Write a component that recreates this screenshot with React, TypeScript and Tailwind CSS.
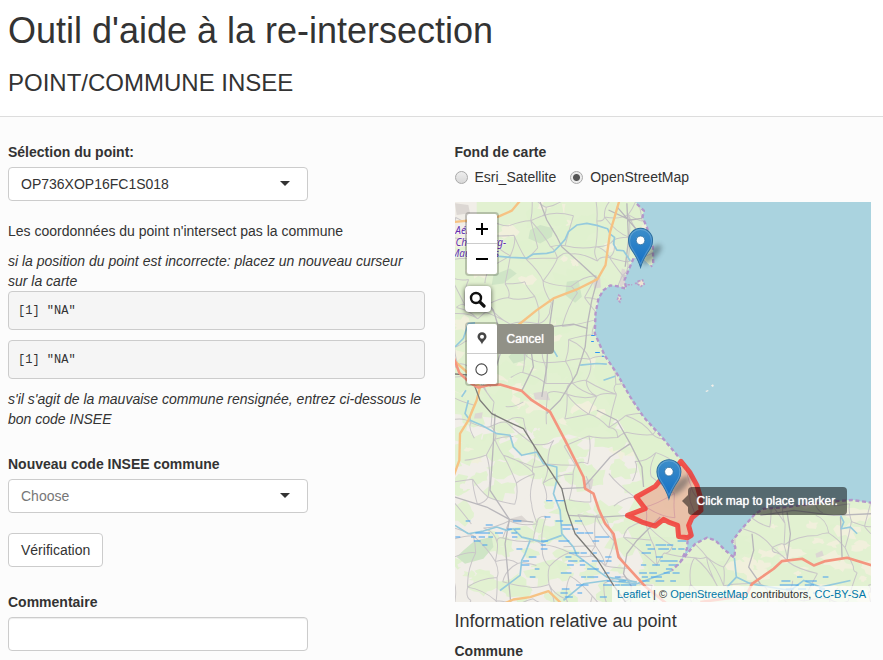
import React from "react";

function seeded(seed: number) {
  let s = seed;
  return () => {
    s = (s * 1664525 + 1013904223) % 4294967296;
    return s / 4294967296;
  };
}

/* Map drawing units: three per screen pixel. */
const LAND =
  "M0 0 L555 0 L560 12 L581 32 L577 52 L590 82 L599 112 L608 140 L609 190 L602 200 L590 188 L575 172 L550 175 L535 210 L523 240 L528 266 L500 258 L480 256 L460 270 L445 295 L436 340 L434 400 L445 425 L463 465 L500 520 L540 590 L580 650 L630 705 L685 770 L700 785 L740 855 L752 925 L725 952 L712 1020 L710 1045 L690 1085 L665 1110 L735 1030 L770 1012 L795 1020 L825 1050 L852 1072 L855 1040 L845 1023 L870 990 L915 940 L940 925 L1010 920 L1120 905 L1205 899 L1270 908 L1270 1210 L0 1210 Z";

const COAST =
  "M560 12 L581 32 L577 52 L590 82 L599 112 L608 140 L609 190 L602 200 M550 175 L535 210 L523 240 L528 266 L500 258 L480 256 L460 270 L445 295 L436 340 L434 400 L445 425 L463 465 L500 520 L540 590 L580 650 L630 705 L685 770 M712 1020 L710 1045 L690 1085 L665 1110 M690 1085 L735 1030 L770 1012 L795 1020 L825 1050 L852 1072 L855 1040 L845 1023 L870 990 L915 940 L940 925 L1010 920 L1120 905 L1205 899 L1270 908";

function blobs(seed: number, count: number, x0: number, y0: number, w: number, h: number, size: number) {
  const r = seeded(seed);
  const out: string[] = [];
  for (let i = 0; i < count; i++) {
    const cx = x0 + r() * w;
    const cy = y0 + r() * h;
    const rad = size * (0.4 + r());
    const pts: string[] = [];
    for (let k = 0; k < 13; k++) {
      const a = (k / 13) * Math.PI * 2;
      const q = rad * (0.45 + r() * 0.8);
      pts.push(`${(cx + Math.cos(a) * q * 1.25).toFixed(0)} ${(cy + Math.sin(a) * q * 0.8).toFixed(0)}`);
    }
    out.push(`M${pts.join(" L")} Z`);
  }
  return out.join(" ");
}

function lanes(seed: number, step: number, keep: number) {
  const r = seeded(seed);
  const cols = Math.ceil(1280 / step) + 1;
  const rows = Math.ceil(1220 / step) + 1;
  const nodes: number[][][] = [];
  for (let j = 0; j < rows; j++) {
    nodes.push([]);
    for (let i = 0; i < cols; i++) {
      nodes[j].push([(i + (r() - 0.5) * 0.8) * step, (j + (r() - 0.5) * 0.8) * step]);
    }
  }
  const out: string[] = [];
  const link = (a: number[], b: number[]) => {
    const mx = (a[0] + b[0]) / 2 + (r() - 0.5) * step * 0.55;
    const my = (a[1] + b[1]) / 2 + (r() - 0.5) * step * 0.55;
    out.push(`M${a[0].toFixed(0)} ${a[1].toFixed(0)} Q${mx.toFixed(0)} ${my.toFixed(0)} ${b[0].toFixed(0)} ${b[1].toFixed(0)}`);
  };
  for (let j = 0; j < rows - 1; j++) {
    for (let i = 0; i < cols - 1; i++) {
      if (r() < keep) link(nodes[j][i], nodes[j][i + 1]);
      if (r() < keep) link(nodes[j][i], nodes[j + 1][i]);
      if (r() < keep * 0.35) link(nodes[j][i], nodes[j + 1][i + 1]);
    }
  }
  return out.join(" ");
}

function marsh(seed: number, areas: number[][]) {
  const r = seeded(seed);
  const out: string[] = [];
  for (const [x, y, w, h, n] of areas) {
    for (let i = 0; i < n; i++) {
      const px = x + r() * w;
      const py = Math.round((y + r() * h) / 12) * 12 + 1;
      out.push(`M${px.toFixed(0)} ${py + 0.5} h${(12 + r() * 12).toFixed(0)}`);
    }
  }
  return out.join(" ");
}

const GREEN = blobs(7, 150, 0, 0, 1270, 1210, 40);
const CREAM = blobs(21, 110, 0, 0, 1270, 780, 25);
const PALE = blobs(43, 28, 0, 760, 500, 440, 28);
const MEADOW = blobs(64, 60, 0, 640, 620, 560, 32);
const CREAM_EAST = blobs(88, 40, 860, 900, 400, 300, 22);
const WOODS =
  "M240 90 L270 75 L310 85 L305 110 L270 130 L235 115 Z M350 245 L385 240 L395 290 L375 308 L345 285 Z M130 225 L180 205 L200 220 L160 250 L125 255 Z M175 470 L205 440 L240 450 L225 480 L190 490 Z M40 1050 L75 1020 L125 1010 L130 1040 L100 1075 L45 1090 L20 1070 Z";
const LANES = lanes(12, 60, 0.58);
const MARSH = marsh(5, [
  [15, 960, 200, 70, 20],
  [320, 960, 60, 100, 10],
  [330, 1040, 150, 150, 38],
  [180, 1010, 110, 130, 10],
  [565, 1030, 105, 110, 40],
  [450, 1120, 130, 60, 9],
  [975, 1130, 150, 50, 20],
  [640, 1010, 90, 40, 6],
  [280, 880, 50, 80, 5],
  [395, 980, 70, 40, 5],
]);

function Pin({ x, y }: { x: number; y: number }) {
  return (
    <g transform={`translate(${x} ${y}) scale(3)`}>
      <ellipse cx="11" cy="-13" rx="13" ry="5" transform="rotate(-44 11 -13)" fill="#25333a" opacity="0.42" filter="url(#soft)" />
      <path
        d="M0 0 C-1.6 -6 -5 -12 -9.5 -18.5 C-11.3 -21.2 -12 -23.4 -12 -27 A12 12 0 0 1 12 -27 C12 -23.4 11.3 -21.2 9.5 -18.5 C5 -12 1.6 -6 0 0 Z"
        fill="url(#pin)"
        stroke="#2d6f9f"
        strokeWidth="1"
      />
      <path
        d="M0 -3.4 C-2 -8.4 -5 -13.6 -8.6 -19 C-10.2 -21.4 -10.9 -23.4 -10.9 -27 A10.9 10.9 0 0 1 10.9 -27 C10.9 -23.4 10.2 -21.4 8.6 -19 C5 -13.6 2 -8.4 0 -3.4 Z"
        fill="none"
        stroke="#ffffff"
        strokeOpacity="0.2"
        strokeWidth="1"
      />
      <circle cx="0" cy="-27" r="4.3" fill="#ffffff" stroke="#2f6f9f" strokeWidth="0.8" />
    </g>
  );
}

function MapDrawing() {
  return (
    <svg viewBox="15 6 1248 1200" preserveAspectRatio="xMinYMin slice" className="block h-full w-full" aria-hidden="true">
      <defs>
        <clipPath id="land">
          <path d={LAND} />
        </clipPath>
        <linearGradient id="pin" x1="0" y1="0" x2="0" y2="1">
          <stop offset="0" stopColor="#3d8ec9" />
          <stop offset="1" stopColor="#126fc6" />
        </linearGradient>
        <filter id="soft" x="-50%" y="-100%" width="200%" height="300%">
          <feGaussianBlur stdDeviation="2.4" />
        </filter>
      </defs>
      <rect x="0" y="0" width="1300" height="1250" fill="#aad3df" />
      <g clipPath="url(#land)">
        <path d={LAND} fill="#e2f1d1" />
        <path d="M0 0 H80 V120 H0 Z M0 640 L200 660 L420 720 L520 640 L590 830 L520 960 L640 1210 L0 1210 Z" fill="#f1eee8" />
        <path d={CREAM} fill="#f1f0dc" />
        <path d={GREEN} fill="#e0f1cf" />
        <path d={PALE} fill="#f1eee8" />
        <path d={MEADOW} fill="#e2f1d1" />
        <path d="M445 425 L500 520 L640 715 L720 800 L640 870 L580 860 L540 720 L470 600 L430 520 Z" fill="#e0f1cf" />
        <path d="M560 1010 L700 1010 L690 1090 L850 1080 L870 1180 L620 1180 Z" fill="#dff0ce" />
        <path d={CREAM_EAST} fill="#f1f0dc" />
        <path d={WOODS} fill="#cfe5c6" />
        <path
          d="M515 205 L525 208 L526 250 L508 262 L510 235 Z M428 240 L450 232 L452 262 L432 266 Z M15 10 L55 15 L60 40 L20 45 Z M250 578 L290 572 L300 600 L255 598 Z M180 955 L215 945 L235 965 L190 968 Z M400 840 L430 835 L425 865 L405 870 Z M75 640 L98 636 L95 655 L72 655 Z M1095 1060 L1115 1050 L1120 1066 L1098 1072 Z"
          fill="#dcd7d3"
        />
        <path d={LANES} fill="none" stroke="#c9c6c8" strokeWidth="3" />
        <g fill="none" stroke="#b9b7bb" strokeWidth="4" strokeLinejoin="round">
          <path d="M442 237 L425 300 L412 370 L405 440 L380 520 L330 600 L290 640" />
          <path d="M310 295 L295 400 L290 500 L275 590" />
          <path d="M270 6 L290 60 L320 110 L335 140 L380 180 L442 237" />
          <path d="M145 430 L230 395 L300 380 L370 372 L412 385" />
          <path d="M135 640 L128 760 L120 870 L178 957 L165 1030 L182 1206" />
          <path d="M15 890 L110 920 L178 957 L250 965" />
          <path d="M335 865 L400 862 L480 770 L540 730 L500 660 L440 630" />
          <path d="M540 730 L575 800 L580 860" />
          <path d="M355 945 L450 950 L535 945" />
          <path d="M630 950 L560 1020 L530 1060 L520 1120 L545 1160" />
          <path d="M905 1000 L910 1050 L895 1100 L930 1150" />
          <path d="M930 945 L1030 930 L1150 945 L1265 940" />
          <path d="M1010 935 L1020 1000 L1010 1080 M1170 950 L1175 1075" />
          <path d="M475 30 L540 60 L575 55 M500 20 L560 90 L590 110 M530 10 L535 120 L525 200" />
          <path d="M120 560 L160 430 L130 330 L80 270 M215 572 L250 500 L240 430" />
        </g>
        <g fill="none" stroke="#95cadd" strokeWidth="5" strokeLinejoin="round">
          <path d="M140 168 L180 172 L230 174 L250 162 L290 160 L310 155 L330 135 L345 118 L355 95 L380 75 L410 70 L440 76 L472 86 L480 102 L493 112 L490 132 L500 150 L520 152 L540 182" />
          <path d="M55 600 L45 640 L60 660 L95 675 L140 700 L180 705 L190 740 L215 765 L260 755 L280 790 L320 800 L320 840 L310 880 L330 930 L335 1000 L370 1040 L380 1065 L420 1095 L470 1130 L560 1145" />
          <path d="M15 975 L55 1000 L100 992 L140 980 L170 990 L190 985 L215 1010 L280 1025 L335 1005" />
          <path d="M240 1020 L225 1060 L215 1080 L210 1125 L150 1170 M340 1200 L400 1150 L470 1140 L560 1150 L665 1110" />
          <path d="M15 440 L40 415 L55 370 L75 368 M390 495 L440 490 L470 492 M460 540 L495 528 M35 590 L48 570 M310 450 L322 470" />
          <path d="M852 1072 L858 1130 L830 1160 M858 1130 L900 1150 L960 1160 L1020 1170 L1060 1140 L1110 1160 L1200 1140" />
          <path d="M1170 945 L1180 965 L1172 985 L1200 980 L1220 1000" />
        </g>
        <path d={MARSH} fill="none" stroke="#429ff0" strokeWidth="3" />
        <path d="M423 406 h12 M423 424 h8 M435 457 h14 M455 468 h6" fill="none" stroke="#2b93f5" strokeWidth="3" />
        <g fill="none" stroke="#f6c283" strokeWidth="7" strokeLinejoin="round">
          <path d="M508 0 L492 55 L480 95 L466 195 L442 237 L380 268 L310 295 L260 330 L210 370 L140 430" />
          <path d="M0 67 L75 60 L145 50 L185 32 L212 0" />
          <path d="M0 470 L50 515 L90 560 L80 600 L55 660 L30 700 L28 780 L8 835" />
          <path d="M160 1210 L190 1197 L240 1190 L295 1172 L335 1210" />
        </g>
        <path d="M0 520 L60 525 L75 560 L90 600 L125 640 L175 665 L220 685 L270 765 L335 865 L350 930 L375 1000 L440 1075 L490 1155 L530 1210" fill="none" stroke="#7d7d7a" strokeWidth="4" strokeLinejoin="round" />
        <g fill="none" stroke="#f4957f" strokeWidth="8" strokeLinejoin="round">
          <path d="M10 470 L28 518 L60 548 L85 562 L115 555 L150 553 L215 572 L245 600 L300 635 L345 720 L400 830 L405 865 L430 880 L445 925 L465 970 L490 1000 L505 1070 L585 1158 L650 1210" />
          <path d="M750 1205 L840 1192 L890 1180 L905 1150 L970 1105 L995 1082 L1055 1075 L1090 1095 L1125 1082 L1190 1072 L1265 1095" />
        </g>
      </g>
      <g fill="#eee4d2" stroke="#b99cc9" strokeWidth="5" strokeDasharray="7 4">
        <path d="M564 243 L577 240 L582 252 L572 259 L563 252 Z M506 285 L513 291 L509 305 L502 298 Z" />
        <path d="M532 254 h14 M554 250 h8" />
      </g>
      <path d={COAST} fill="none" stroke="#b497cb" strokeWidth="7" strokeDasharray="12 8" strokeLinejoin="round" />
      <path d="M765 572 l8 -3 l2 3 l-7 3 Z M782 556 l6 -4 l3 5 l-5 3 Z" fill="#f2efe9" />
      <g className="text-[30px] italic" fill="#6430ae" stroke="#ffffff" strokeOpacity="0.6" strokeWidth="3" paintOrder="stroke" fontFamily="'Noto Sans', sans-serif">
        <text x="16" y="102">Aéroport</text>
        <text x="168" y="138" textAnchor="end">Cherbourg-</text>
        <text x="147" y="172" textAnchor="end">Maupertus</text>
      </g>
      <path
        d="M692 783 L718 815 L740 855 L750 890 L752 930 L725 952 L715 975 L723 1005 L712 1012 L685 1008 L682 975 L655 965 L640 957 L615 977 L575 965 L532 945 L585 925 L558 890 L615 858 L630 840 L665 820 Z"
        fill="#ff3333"
        fillOpacity="0.25"
        stroke="#f23a36"
        strokeOpacity="0.85"
        strokeWidth="15"
        strokeLinejoin="round"
      />
      <Pin x={571} y={202} />
      <Pin x={656} y={895} />
    </svg>
  );
}

function Caret() {
  return (
    <svg viewBox="0 0 10 5" className="pointer-events-none absolute top-[14px] right-[18px] h-[5px] w-[10px]" aria-hidden="true">
      <path d="M0 0 H10 L5 5 Z" fill="#333333" />
    </svg>
  );
}

function Select({ id, label, value, muted }: { id: string; label: string; value: string; muted?: boolean }) {
  return (
    <div className="flex flex-col gap-[5px]">
      <label htmlFor={id} className="font-bold">
        {label}
      </label>
      <div className="relative w-[300px] max-w-full">
        <select
          id={id}
          defaultValue={value}
          className={`block h-[34px] w-full appearance-none rounded border border-[#cccccc] bg-white px-3 leading-5 ${muted ? "text-[#777777]" : "text-[#333333]"}`}
        >
          <option>{value}</option>
        </select>
        <Caret />
      </div>
    </div>
  );
}

function Radio({ label, checked }: { label: string; checked?: boolean }) {
  return (
    <label className="flex items-center gap-[7px]">
      <input
        type="radio"
        name="basemap"
        defaultChecked={checked}
        className="h-[13px] w-[13px] appearance-none rounded-full border border-[#a9a9a9] bg-linear-to-b from-[#eeeeee] to-[#d8d8d8] checked:bg-[radial-gradient(circle,#555555_0_3px,#ececec_4px)]"
      />
      {label}
    </label>
  );
}

function MapPanel() {
  return (
    <div className="relative mt-[15px] h-[400px] overflow-hidden bg-[#aad3df] text-xs">
      <MapDrawing />

      <div className="absolute top-[10px] left-[10px] flex w-[34px] flex-col rounded border-2 border-black/20 bg-white bg-clip-padding">
        <button type="button" aria-label="Zoom in" className="flex h-[30px] items-center justify-center border-b border-[#cccccc]">
          <svg viewBox="0 0 12 12" className="h-3 w-3">
            <path d="M6 0 V12 M0 6 H12" stroke="#000000" strokeWidth="2" />
          </svg>
        </button>
        <button type="button" aria-label="Zoom out" className="flex h-[30px] items-center justify-center">
          <svg viewBox="0 0 12 12" className="h-3 w-3">
            <path d="M0 6 H12" stroke="#000000" strokeWidth="2" />
          </svg>
        </button>
      </div>

      <button type="button" aria-label="Search" className="absolute top-[84px] left-[10px] flex h-[26px] w-[26px] items-center justify-center rounded bg-white shadow-[0_1px_5px_rgba(0,0,0,0.65)]">
        <svg viewBox="0 0 17 17" className="h-[17px] w-[17px]">
          <circle cx="7" cy="7" r="5" fill="none" stroke="#111111" strokeWidth="2.4" />
          <path d="M10.8 10.8 L15 15" stroke="#111111" strokeWidth="3.2" strokeLinecap="round" />
        </svg>
      </button>

      <div className="absolute top-[120px] left-[10px] flex items-start">
        <div className="flex w-[34px] flex-col rounded border-2 border-black/20 bg-white bg-clip-padding">
          <button type="button" aria-label="Draw a marker" className="flex h-[30px] items-center justify-center border-b border-[#cccccc]">
            <svg viewBox="0 0 10 13" className="h-[13px] w-[10px]">
              <path fillRule="evenodd" d="M5 12.5 C4.5 9.5 0.5 7.6 0.5 4.7 A4.5 4.4 0 0 1 9.5 4.7 C9.5 7.6 5.5 9.5 5 12.5 Z M5 2.8 A2 2 0 1 0 5 6.8 A2 2 0 1 0 5 2.8 Z" fill="#464646" />
            </svg>
          </button>
          <button type="button" aria-label="Draw a circle marker" className="flex h-[30px] items-center justify-center">
            <svg viewBox="0 0 13 13" className="h-[13px] w-[13px]">
              <circle cx="6.5" cy="6.5" r="5.6" fill="none" stroke="#464646" strokeWidth="1.1" />
            </svg>
          </button>
        </div>
        <button type="button" className="mt-[2px] -ml-[2px] h-[30px] rounded-r bg-[#919187] px-[10px] text-white text-shadow-[0_0_1px_#ffffff]">
          Cancel
        </button>
      </div>

      <div className="absolute top-[285px] left-[233px] rounded bg-black/50 px-[9px] py-1 leading-5 whitespace-nowrap text-white text-shadow-[0_0_1px_#ffffff]">
        <span className="absolute top-2 -left-[6px] h-0 w-0 border-y-[6px] border-r-[6px] border-y-transparent border-r-black/50" />
        Click map to place marker.
      </div>

      <div className="absolute right-0 bottom-0 bg-white/70 px-[5px] text-[11px] leading-4 whitespace-nowrap text-[#333333]">
        <a href="#leaflet" className="text-[#0078a8]">Leaflet</a> | © <a href="#osm" className="text-[#0078a8]">OpenStreetMap</a> contributors,{" "}
        <a href="#licence" className="text-[#0078a8]">CC-BY-SA</a>
      </div>
    </div>
  );
}

export default function App() {
  return (
    <div className="min-h-screen bg-[#fcfcfc] font-['Liberation_Sans',Arial,sans-serif] text-sm leading-5 text-[#333333]">
      <header className="flex flex-col gap-[19px] border-b border-[#dddddd] bg-white px-2 pt-[11px] pb-5">
        <h1 className="text-4xl leading-10">Outil d'aide à la re-intersection</h1>
        <h2 className="text-2xl leading-[26px]">POINT/COMMUNE INSEE</h2>
      </header>

      <main className="grid grid-cols-2 gap-[30px] pt-[25px] pr-3 pl-2">
        <section className="flex flex-col">
          <Select id="point" label="Sélection du point:" value="OP736XOP16FC1S018" />
          <p className="mt-5">Les coordonnées du point n'intersect pas la commune</p>
          <p className="mt-[10px] italic">si la position du point est incorrecte: placez un nouveau curseur sur la carte</p>
          <div className="flex flex-col gap-[10px] font-['Liberation_Mono',monospace] text-xs">
            <pre className="rounded border border-[#cccccc] bg-[#f5f5f5] px-[9px] pt-[10px] pb-2 font-[inherit] leading-[19px]">[1] "NA"</pre>
            <pre className="rounded border border-[#cccccc] bg-[#f5f5f5] px-[9px] pt-[10px] pb-2 font-[inherit] leading-[19px]">[1] "NA"</pre>
          </div>
          <p className="mt-[10px] mb-[25px] italic">s'il s'agit de la mauvaise commune rensignée, entrez ci-dessous le bon code INSEE</p>
          <Select id="insee" label="Nouveau code INSEE commune" value="Choose" muted />
          <button type="button" className="mt-5 h-[34px] self-start rounded border border-[#cccccc] bg-white px-3">
            Vérification
          </button>
          <div className="mt-[25px] flex flex-col gap-[5px]">
            <label htmlFor="comment" className="font-bold">
              Commentaire
            </label>
            <input id="comment" type="text" className="h-[34px] w-[300px] max-w-full rounded border border-[#cccccc] bg-white px-3 shadow-[inset_0_1px_1px_rgba(0,0,0,0.075)]" />
          </div>
        </section>

        <section className="flex flex-col">
          <fieldset>
            <legend className="font-bold">Fond de carte</legend>
            <div className="mt-[5px] flex gap-[14px]">
              <Radio label="Esri_Satellite" />
              <Radio label="OpenStreetMap" checked />
            </div>
          </fieldset>
          <MapPanel />
          <h4 className="mt-[9px] text-lg leading-5">Information relative au point</h4>
          <p className="mt-[10px] font-bold">Commune</p>
        </section>
      </main>
    </div>
  );
}
